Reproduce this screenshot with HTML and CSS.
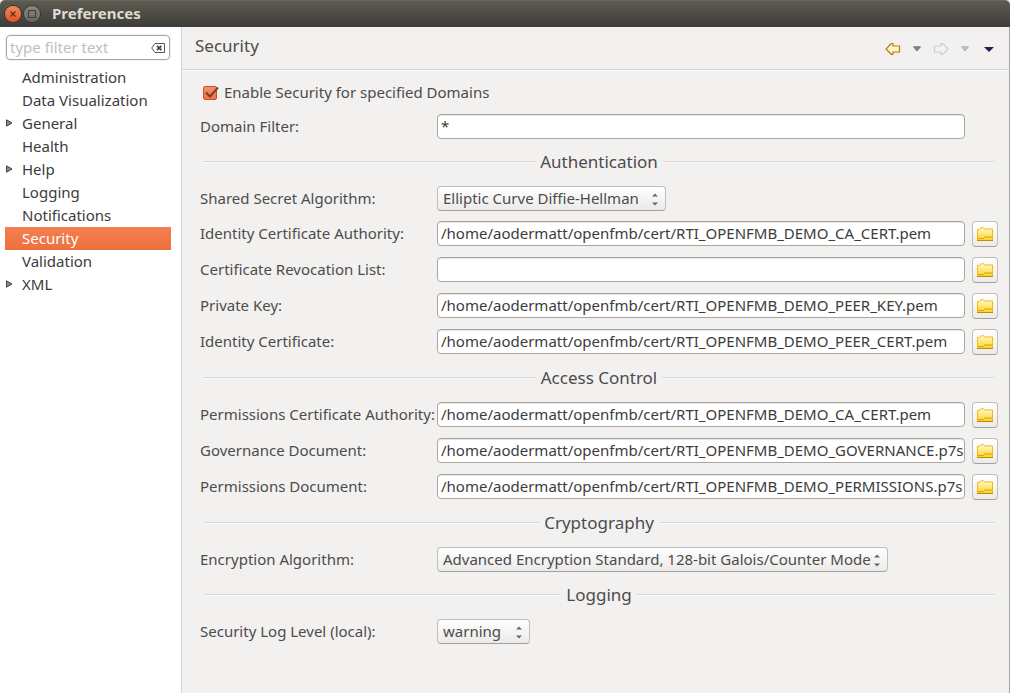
FILE: index.html
```html
<!DOCTYPE html>
<html lang="en">
<head>
<meta charset="utf-8">
<meta name="viewport" content="width=device-width, initial-scale=1">
<title>Preferences</title>
<link rel="stylesheet" href="styles.css">
</head>
<body>
<svg class="defs" aria-hidden="true">
  <defs>
    <linearGradient id="gold" x1="0" y1="0" x2="0" y2="1">
      <stop offset="0" stop-color="#fff9d2"/><stop offset="1" stop-color="#ffd31c"/>
    </linearGradient>
    <linearGradient id="arrow-fill" x1="0" y1="0" x2="0" y2="1">
      <stop offset="0" stop-color="#fffef4"/><stop offset="1" stop-color="#fdea9e"/>
    </linearGradient>
    <symbol id="folder" viewBox="0 0 16 14">
      <path d="M.5 13.500V2.500H2.500L4 .8h2.500l1.500 1.200h7.500v11.500z" fill="url(#gold)" stroke="#f2b90f"/>
      <path d="M1 11.500h5.500l1.500-1.500h7" fill="none" stroke="#d9a010"/>
      <path d="M0 13.500h16" stroke="#c08a08"/>
    </symbol>
    <symbol id="spin" viewBox="0 0 6 13">
      <path d="M0 3.500L3 .5l3 3zM0 9.500h6l-3 3z" fill="#666"/>
    </symbol>
    <symbol id="expander" viewBox="0 0 7 8">
      <path d="M.5.8v6.400L6 4z" fill="#8a8a8a" stroke="#444"/>
    </symbol>
  </defs>
</svg>
<div class="window">
  <header class="titlebar">
    <button class="wm wm-close" aria-label="Close"><svg width="16" height="16" viewBox="0 0 16 16"><path d="M5.500 5.500l5 5m0-5l-5 5" stroke="#5a2a1a" stroke-width="1.100"/></svg></button>
    <button class="wm" aria-label="Maximize"><svg width="16" height="16" viewBox="0 0 16 16"><path d="M4.500 4.500h7v7h-7z" fill="none" stroke="#3c3b37"/></svg></button>
    <h1 class="window-title">Preferences</h1>
  </header>
  <div class="body">
    <nav class="sidebar" aria-label="Preference pages">
      <div class="filter">
        <input class="filter-input" type="text" placeholder="type filter text" aria-label="Filter">
        <button class="clear" aria-label="Clear filter"><svg width="14" height="10" viewBox="0 0 14 10"><path d="M4 .5h9.500v9H4L.7 5z" fill="#fff" stroke="#555"/><path d="M6 2.800l4.400 4.400m0-4.400L6 7.200" stroke="#444" stroke-width="1.800"/></svg></button>
      </div>
      <ul class="tree">
        <li><button class="node">Administration</button></li>
        <li><button class="node">Data Visualization</button></li>
        <li><button class="node" aria-expanded="false"><svg class="expander"><use href="#expander"/></svg>General</button></li>
        <li><button class="node">Health</button></li>
        <li><button class="node" aria-expanded="false"><svg class="expander"><use href="#expander"/></svg>Help</button></li>
        <li><button class="node">Logging</button></li>
        <li><button class="node">Notifications</button></li>
        <li><button class="node selected" aria-current="page">Security</button></li>
        <li><button class="node">Validation</button></li>
        <li><button class="node" aria-expanded="false"><svg class="expander"><use href="#expander"/></svg>XML</button></li>
      </ul>
    </nav>
    <main class="page">
      <div class="page-head">
        <h2 class="page-title">Security</h2>
        <div class="tools">
          <button class="tool" aria-label="Back"><svg width="16" height="14" viewBox="0 0 16 14"><path d="M1 7l5.500-5.500h1.500v2.500h6.500v6H8v2.500H6.500z" fill="url(#arrow-fill)" stroke="#b97a10" stroke-width="1.200" stroke-linejoin="round"/></svg></button>
          <button class="tool" aria-label="Back history"><svg width="8" height="6" viewBox="0 0 8 6"><path d="M.5.8h7L4 5z" fill="#888" stroke="#777"/></svg></button>
          <button class="tool" aria-label="Forward" disabled><svg width="16" height="14" viewBox="0 0 16 14"><path d="M15 7L9.500 1.500H8v2.500H1.500v6H8v2.500h1.500z" fill="#f4f3f2" stroke="#ccc" stroke-width="1.200" stroke-linejoin="round"/></svg></button>
          <button class="tool" aria-label="Forward history" disabled><svg width="8" height="6" viewBox="0 0 8 6"><path d="M.5.8h7L4 5z" fill="#c4c4c4" stroke="#b0b0b0"/></svg></button>
          <button class="tool menu" aria-label="Menu"><svg width="10" height="5" viewBox="0 0 10 5"><path d="M0 0h10L5 5z" fill="#2e1a4a"/></svg></button>
        </div>
      </div>
      <form class="form">
        <div class="enable">
          <span class="check"><input type="checkbox" id="enable" checked><svg class="tick" width="16" height="15" viewBox="0 0 16 15"><path d="M3 6.500l4 4L15 1.500" fill="none" stroke="#74402e" stroke-width="1.900"/></svg></span>
          <label for="enable">Enable Security for specified Domains</label>
        </div>
        <label for="domain">Domain Filter:</label><input class="field" id="domain" type="text" value="*">

        <h3 class="section">Authentication</h3>
        <label for="secret">Shared Secret Algorithm:</label>
        <span class="combo combo-medium"><select id="secret"><option>Elliptic Curve Diffie-Hellman</option></select><svg class="spin"><use href="#spin"/></svg></span>
        <label for="ica">Identity Certificate Authority:</label><input class="field" id="ica" type="text" value="/home/aodermatt/openfmb/cert/RTI_OPENFMB_DEMO_CA_CERT.pem"><button type="button" class="browse" aria-label="Browse"><svg class="folder"><use href="#folder"/></svg></button>
        <label for="crl">Certificate Revocation List:</label><input class="field" id="crl" type="text" value=""><button type="button" class="browse" aria-label="Browse"><svg class="folder"><use href="#folder"/></svg></button>
        <label for="key">Private Key:</label><input class="field" id="key" type="text" value="/home/aodermatt/openfmb/cert/RTI_OPENFMB_DEMO_PEER_KEY.pem"><button type="button" class="browse" aria-label="Browse"><svg class="folder"><use href="#folder"/></svg></button>
        <label for="cert">Identity Certificate:</label><input class="field" id="cert" type="text" value="/home/aodermatt/openfmb/cert/RTI_OPENFMB_DEMO_PEER_CERT.pem"><button type="button" class="browse" aria-label="Browse"><svg class="folder"><use href="#folder"/></svg></button>

        <h3 class="section">Access Control</h3>
        <label for="pca">Permissions Certificate Authority:</label><input class="field" id="pca" type="text" value="/home/aodermatt/openfmb/cert/RTI_OPENFMB_DEMO_CA_CERT.pem"><button type="button" class="browse" aria-label="Browse"><svg class="folder"><use href="#folder"/></svg></button>
        <label for="gov">Governance Document:</label><input class="field" id="gov" type="text" value="/home/aodermatt/openfmb/cert/RTI_OPENFMB_DEMO_GOVERNANCE.p7s"><button type="button" class="browse" aria-label="Browse"><svg class="folder"><use href="#folder"/></svg></button>
        <label for="perm">Permissions Document:</label><input class="field" id="perm" type="text" value="/home/aodermatt/openfmb/cert/RTI_OPENFMB_DEMO_PERMISSIONS.p7s"><button type="button" class="browse" aria-label="Browse"><svg class="folder"><use href="#folder"/></svg></button>

        <h3 class="section">Cryptography</h3>
        <label for="enc">Encryption Algorithm:</label>
        <span class="combo combo-large"><select id="enc"><option>Advanced Encryption Standard, 128-bit Galois/Counter Mode</option></select><svg class="spin"><use href="#spin"/></svg></span>

        <h3 class="section">Logging</h3>
        <label for="log">Security Log Level (local):</label>
        <span class="combo combo-small"><select id="log"><option>warning</option></select><svg class="spin"><use href="#spin"/></svg></span>
      </form>
    </main>
  </div>
</div>
</body>
</html>
```
FILE: styles.css
```css
* { box-sizing: border-box; }
body {
  margin: 0;
  background: #f2f1f0;
  color: #4c4c4c;
  font: 15px/20px "Noto Sans", "Open Sans", sans-serif;
}
button, input, select { font: inherit; color: inherit; margin: 0; }
button { padding: 0; border: 0; background: none; }
svg { display: block; }
.defs { position: absolute; width: 0; height: 0; }
.window { min-height: 100vh; display: flex; flex-direction: column; }

.titlebar {
  height: 27px;
  display: flex;
  align-items: center;
  gap: 3px;
  padding: 0 5px;
  background: linear-gradient(#5d5b50, #3d3c38);
  border-top: 1px solid #69665a;
  border-radius: 5px 5px 0 0;
}
.wm {
  width: 16px;
  height: 16px;
  border-radius: 50%;
  background: linear-gradient(#8b8980, #66645d);
  box-shadow: 0 0 0 1px #383733;
}
.wm-close { background: linear-gradient(#f58a63, #e2501f); }
.window-title {
  margin: 0 0 0 9px;
  padding-bottom: 2px;
  font-size: 15px;
  line-height: 20px;
  font-weight: 700;
  color: #dfdbd2;
}

.body { flex: 1; display: flex; border-right: 1px solid #a5a5a5; }
.sidebar {
  width: 182px;
  flex: none;
  background: #fff;
  border-right: 1px solid #d6d4d2;
  padding: 7px 10px 0 5px;
}
.filter {
  display: flex;
  align-items: center;
  height: 25px;
  margin: 1px 1px 6px;
  padding: 0 4px 0 3px;
  border: 1px solid #aaa59f;
  border-radius: 4px;
  box-shadow: 0 0 0 1px #f2f1f0;
}
.filter-input { flex: 1; min-width: 0; padding: 0 0 2px; border: 0; outline: 0; background: none; }
.filter-input::placeholder { color: #c4beb8; opacity: 1; }
.tree { list-style: none; margin: 0; padding: 0; }
.node {
  position: relative;
  display: block;
  width: 100%;
  height: 23px;
  padding: 0 0 2px 17px;
  text-align: left;
  color: #3c3c3c;
}
.selected { background: linear-gradient(#f47f50, #ec713d); color: #fff; }
.expander { position: absolute; left: 1px; top: 7px; width: 7px; height: 8px; }

.page { flex: 1; min-width: 0; }
.page-head {
  display: flex;
  justify-content: space-between;
  height: 43px;
  padding: 7px 15px 0 13px;
  border-bottom: 1px solid #d8d6d4;
  box-shadow: 0 1px #fafafa;
}
.page-title { margin: 0; font-size: 17px; line-height: 23px; font-weight: 400; }
.tools { display: flex; align-items: center; gap: 12px; height: 30px; }
.menu { margin-left: 3px; }

.form {
  display: grid;
  grid-template-columns: 231px minmax(0, 1fr) 27px;
  column-gap: 6px;
  row-gap: 10px;
  align-items: center;
  padding: 12px 11px 20px 18px;
}
.form label { padding-bottom: 2px; white-space: nowrap; }
.form > label { grid-column: 1; }
.enable { grid-column: 1 / -1; display: flex; align-items: center; gap: 7px; height: 22px; padding-left: 3px; }
.check { position: relative; width: 14px; height: 14px; }
.check input {
  appearance: none;
  display: block;
  width: 14px;
  height: 14px;
  border: 1px solid #c4542a;
  border-radius: 2px;
  background: linear-gradient(#f99068, #f1703f);
}
.tick { position: absolute; left: 0; top: 0; pointer-events: none; }
.field {
  grid-column: 2;
  align-self: start;
  width: 100%;
  height: 25px;
  padding: 0 0 2px 3px;
  border: 1px solid #aaa59f;
  border-radius: 4px;
  background: #fff;
  box-shadow: inset 0 1px #e6e5e4;
  color: #3c3c3c;
}
.section {
  grid-column: 1 / -1;
  display: flex;
  align-items: center;
  gap: 5px;
  height: 25px;
  margin: 0 0 2px;
  padding: 0 4px;
  font-size: 17px;
  font-weight: 400;
}
.section::before, .section::after {
  content: "";
  flex: 1;
  height: 2px;
  background: linear-gradient(#d9d7d5 50%, #fafafa 50%);
}
.combo { grid-column: 2 / -1; position: relative; max-width: 100%; }
.combo-small { width: 93px; }
.combo-medium { width: 229px; }
.combo-large { width: 451px; }
.combo select {
  appearance: none;
  display: block;
  width: 100%;
  height: 25px;
  padding: 0 15px 2px 5px;
  border: 1px solid #c0bdba;
  border-bottom-color: #a3a09d;
  border-radius: 4px;
  background: linear-gradient(#fff, #ebeae9);
}
.spin { position: absolute; right: 8px; top: 7px; width: 6px; height: 13px; pointer-events: none; }
.browse {
  justify-self: end;
  width: 26px;
  height: 26px;
  display: grid;
  place-items: center;
  border: 1px solid #c0bdba;
  border-bottom-color: #a3a09d;
  border-radius: 4px;
  background: linear-gradient(#fff, #ecebea);
}
.folder { width: 16px; height: 14px; }
```
